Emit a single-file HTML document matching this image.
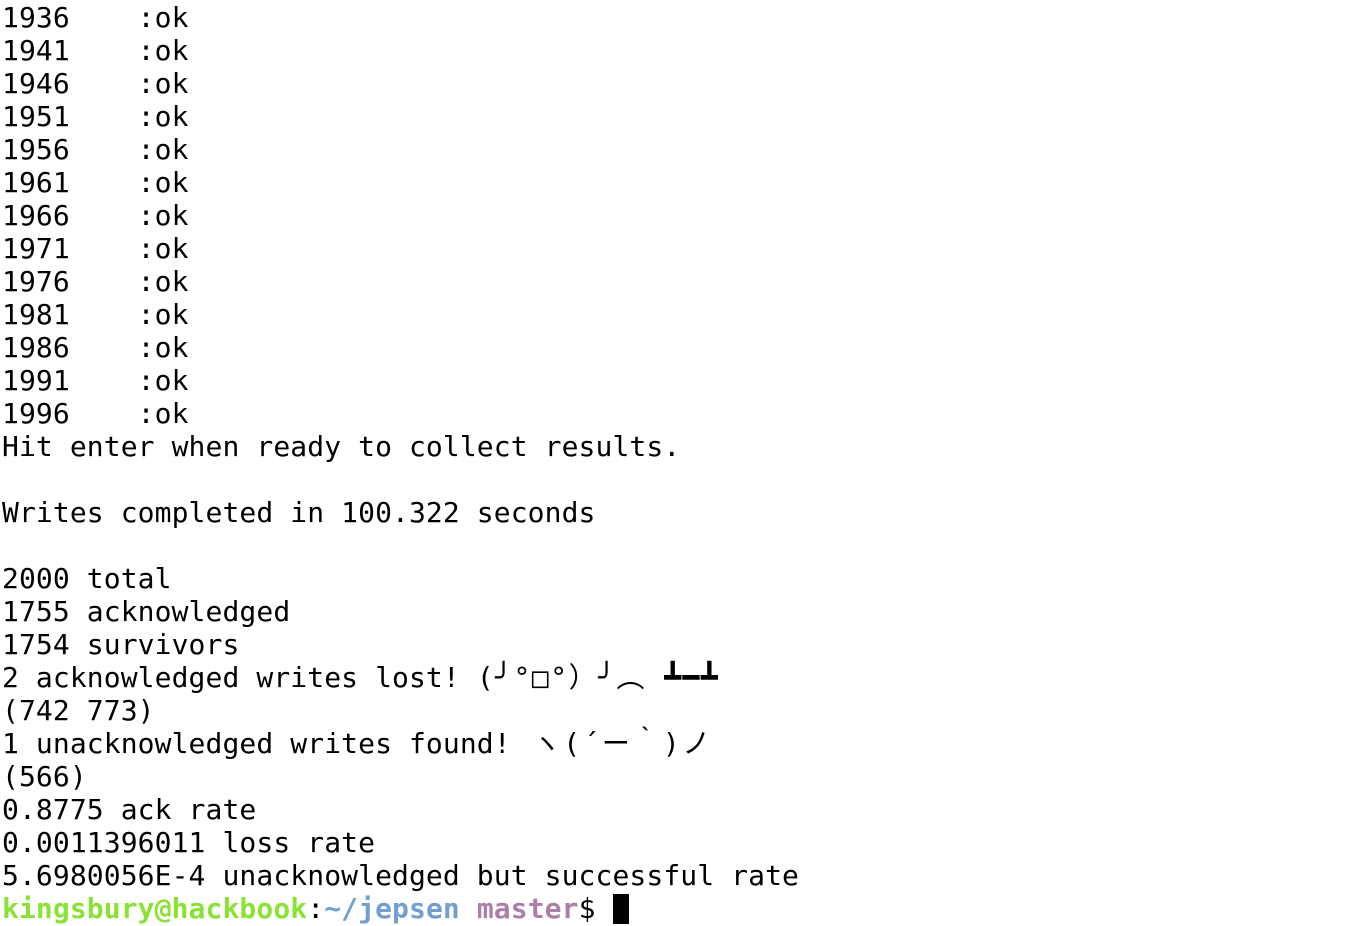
<!DOCTYPE html>
<html><head><meta charset="utf-8"><style>
html,body{margin:0;padding:0;background:#fff;width:1362px;height:926px;overflow:hidden}
pre{margin:0;padding:1px 0 0 2px;font-family:"DejaVu Sans Mono","Liberation Mono","Noto Sans CJK JP",monospace;font-size:28px;line-height:33px;color:#000;white-space:pre;letter-spacing:0.1px}
.g{color:#8ae234;font-weight:bold}.b{color:#729fcf;font-weight:bold}.m{color:#ad7fa8;font-weight:bold}
.c{display:inline-block;width:16px;height:30px;background:#000;vertical-align:-6px}
.k{letter-spacing:1.5px}.k2{letter-spacing:2.5px;margin-left:5px}
</style></head><body><pre>1936    :ok
1941    :ok
1946    :ok
1951    :ok
1956    :ok
1961    :ok
1966    :ok
1971    :ok
1976    :ok
1981    :ok
1986    :ok
1991    :ok
1996    :ok
Hit enter when ready to collect results.

Writes completed in 100.322 seconds

2000 total
1755 acknowledged
1754 survivors
2 acknowledged writes lost! <span class="k">(╯°□°）╯︵ ┻━┻</span>
(742 773)
1 unacknowledged writes found! <span class="k2">ヽ(´ー｀)ノ</span>
(566)
0.8775 ack rate
0.0011396011 loss rate
5.6980056E-4 unacknowledged but successful rate
<span class="g">kingsbury@hackbook</span>:<span class="b">~/jepsen</span> <span class="m">master</span>$ <span class="c"></span></pre></body></html>
